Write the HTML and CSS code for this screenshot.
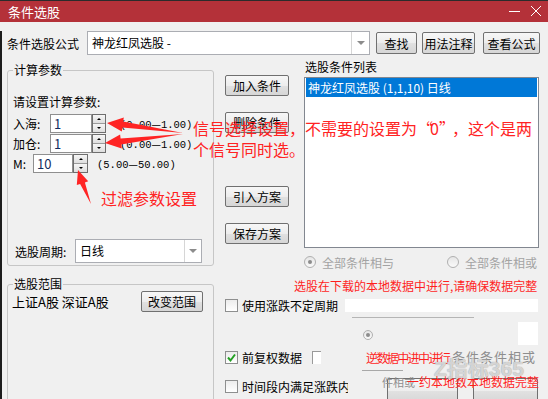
FILE: index.html
```html
<html>
<head>
    <link rel="stylesheet" href="styles.css">
    <title>条件选股</title>
</head>
<body>
<div class="window">
    <div class="titlebar">
        <span class="title">条件选股</span>
        <svg class="winbtns" width="40" height="21" viewBox="0 0 40 21">
            <line x1="3" y1="10.5" x2="14" y2="10.5" stroke="#fff" stroke-width="1"/>
            <line x1="25" y1="5" x2="35" y2="15" stroke="#fff" stroke-width="1"/>
            <line x1="35" y1="5" x2="25" y2="15" stroke="#fff" stroke-width="1"/>
        </svg>
    </div>

    <div class="client">
        <div class="formula-row">
            <span class="formula-label">条件选股公式</span>
            <div class="combo wide">
                <span class="combo-text">神龙红凤选股 -</span>
                <span class="combo-arrow"></span>
            </div>
            <button class="btn find">查找</button>
            <button class="btn usage">用法注释</button>
            <button class="btn view">查看公式</button>
        </div>

        <div class="main">
            <div class="col-left">
                <fieldset class="group params">
                    <legend>计算参数</legend>
                    <div class="hint">请设置计算参数:</div>
                    <div class="spin-row first">
                        <span class="lbl">入海:</span>
                        <span class="spin-input">1</span>
                        <span class="spin"><span class="up"></span><span class="down"></span></span>
                        <span class="range-text">(0.00<span class="dash">—</span>1.00)</span>
                    </div>
                    <div class="spin-row">
                        <span class="lbl">加仓:</span>
                        <span class="spin-input">1</span>
                        <span class="spin"><span class="up"></span><span class="down"></span></span>
                        <span class="range-text">(0.00<span class="dash">—</span>1.00)</span>
                    </div>
                    <div class="spin-row short">
                        <span class="lbl">M:</span>
                        <span class="spin-input">10</span>
                        <span class="spin"><span class="up"></span><span class="down"></span></span>
                        <span class="range-text">(5.00<span class="dash">—</span>50.00)</span>
                    </div>
                    <div class="period-row">
                        <span class="period-label">选股周期:</span>
                        <div class="combo period">
                            <span class="combo-text">日线</span>
                            <span class="combo-arrow"></span>
                        </div>
                    </div>
                </fieldset>

                <fieldset class="group range">
                    <legend>选股范围</legend>
                    <div class="range-row">
                        <span class="market">上证A股 深证A股</span>
                        <button class="btn change">改变范围</button>
                    </div>
                </fieldset>
            </div>

            <div class="col-right">
                <div class="upper">
                    <div class="btn-col">
                        <button class="btn add">加入条件</button>
                        <button class="btn del">删除条件</button>
                        <button class="btn load">引入方案</button>
                        <button class="btn save">保存方案</button>
                    </div>
                    <div class="list-col">
                        <div class="list-label">选股条件列表</div>
                        <div class="listbox">
                            <div class="list-item selected">神龙红凤选股 (1,1,10) 日线</div>
                        </div>
                        <div class="radio-row">
                            <span class="radio-item"><span class="radio on"></span><span class="radio-text">全部条件相与</span></span>
                            <span class="radio-item"><span class="radio"></span><span class="radio-text">全部条件相或</span></span>
                        </div>
                    </div>
                </div>

                <div class="lower">
                    <div class="note">选股在下载的本地数据中进行,请确保数据完整</div>
                    <div class="check-row first">
                        <span class="box"></span>
                        <span class="check-text">使用涨跌不定周期</span>
                        <span class="period-input"></span>
                    </div>
                    <div class="ghost-row">
                        <div class="ghost-line"><span class="radio small on"></span></div>
                        <div class="ghost-box"></div>
                    </div>
                    <div class="check-row second">
                        <span class="box checked">
                            <svg width="11" height="11" viewBox="0 0 11 11"><polyline points="2,5.5 4.5,8.5 9,2.5" fill="none" stroke="#23a023" stroke-width="2"/></svg>
                        </span>
                        <span class="check-text">前复权数据</span>
                        <span class="frag-box"></span>
                    </div>
                    <div class="check-row third">
                        <span class="box"></span>
                        <span class="check-text clip">时间段内满足涨跌内</span>
                        <button class="btn ghost-btn one"></button>
                        <button class="btn ghost-btn two"></button>
                    </div>
                </div>
            </div>
        </div>
    </div>

    <!-- annotations drawn over the dialog -->
    <svg class="arrows" width="548" height="399" viewBox="0 0 548 399">
        <polygon points="107,123 123.8,117.4 123.2,121.6 183,133 122.4,127.6 121.8,131.5" fill="#ff2424"/>
        <polygon points="105,143 120.1,134.6 120.6,138.6 183,134 121.2,144.4 121.7,148.4" fill="#ff2424"/>
        <polygon points="78,170 88.2,181.3 84.9,182.4 91,204 80.1,184 76.8,185.1" fill="#ff2424"/>
    </svg>
    <div class="anno signal">信号选择设置，不需要的设置为<span class="q">“</span>0<span class="q">”</span>，这个是两<br>个信号同时选。</div>
    <div class="anno filter">过滤参数设置</div>
    <div class="ghost-text red one">逆数据中进中进行</div>
    <div class="ghost-text grey one">条件条件相或</div>
    <div class="ghost-text grey two">件相或</div>
    <div class="ghost-text red two">一约本地数本地数据完整</div>
    <div class="ghost-rule"></div>
    <div class="watermark">Z指标365</div>
</div>
</body>
</html>
```

FILE: styles.css
```css
* {
    box-sizing: border-box;
}

body {
    margin: 0;
    width: 548px;
    height: 399px;
    overflow: hidden;
    background: #f0f0f0;
    font-family: "Noto Sans CJK SC", "Noto Sans", sans-serif;
    font-size: 12px;
    color: #000;
}

.window {
    position: relative;
    width: 548px;
    height: 399px;
    overflow: hidden;
}

.titlebar {
    height: 22px;
    background: #b43139;
    border-top: 1px solid #2b2b2b;
    color: #fff;
    display: flex;
    align-items: center;
    padding-left: 8px;
    font-size: 13px;
    line-height: 16px;
}

.title {
    flex: 1;
}

.winbtns {
    margin-right: 2px;
}

.client {
    height: 377px;
    border-left: 2px solid #1c1c1c;
    padding-left: 5px;
}

/* buttons */
.btn {
    height: 21px;
    padding: 0;
    border: 1px solid #707070;
    border-radius: 2px;
    background: linear-gradient(#f7f7f7, #ededed 50%, #e1e1e1 51%, #d6d6d6);
    font-family: inherit;
    font-size: 12px;
    line-height: 19px;
    color: #000;
    text-align: center;
}

/* combo boxes */
.combo {
    display: flex;
    height: 24px;
    background: #fff;
    border: 1px solid #abadb3;
}

.combo-text {
    flex: 1;
    padding-left: 4px;
    line-height: 22px;
}

.combo-arrow {
    width: 18px;
    border-left: 1px solid #d6d6d6;
    display: flex;
    align-items: center;
    justify-content: center;
}

.combo-arrow::after {
    content: "";
    border-left: 4px solid transparent;
    border-right: 4px solid transparent;
    border-top: 4px solid #8c8c8c;
}

.formula-row {
    display: flex;
    align-items: center;
    height: 24px;
    margin-top: 9px;
}

.formula-label {
    width: 80px;
}

.combo.wide {
    width: 283px;
}

.find {
    width: 41px;
    height: 22px;
    margin-left: 6px;
}

.usage {
    width: 53px;
    height: 22px;
    margin-left: 5px;
}

.view {
    width: 57px;
    height: 22px;
    margin-left: 8px;
}

.main {
    display: flex;
}

.col-left {
    width: 207px;
}

.group {
    margin: 0;
    padding: 0 5px;
    border: 1px solid #c6c6c6;
    border-radius: 3px;
    min-width: 0;
}

.group legend {
    padding: 0 1px;
    line-height: 14px;
    font-size: 12px;
}

.params {
    margin-top: 8px;
    height: 203px;
}

.hint {
    margin-top: 17px;
    line-height: 16px;
}

.spin-row {
    display: flex;
    align-items: center;
    height: 19px;
    margin-top: 1px;
}

.spin-row.first {
    margin-top: 4px;
}

.spin-row .lbl {
    width: 37px;
}

.spin-row.short .lbl {
    width: 20px;
}

.spin-input {
    width: 42px;
    height: 19px;
    background: #fff;
    border: 1px solid #8f8f8f;
    padding-left: 3px;
    font-size: 13px;
    line-height: 17px;
    color: #142c5e;
}

.spin-row.short .spin-input {
    width: 40px;
}

.spin {
    width: 14px;
    height: 19px;
    display: flex;
    flex-direction: column;
    border: 1px solid #6e6e6e;
    background: #f0f0f0;
}

.spin-row.short .spin {
    width: 15px;
}

.spin span {
    flex: 1;
    display: flex;
    align-items: center;
    justify-content: center;
    background: linear-gradient(#f6f6f6, #dedede);
}

.spin .up {
    border-bottom: 1px solid #9a9a9a;
}

.spin .up::after {
    content: "";
    border-left: 2px solid transparent;
    border-right: 2px solid transparent;
    border-bottom: 2px solid #000;
}

.spin .down::after {
    content: "";
    border-left: 2px solid transparent;
    border-right: 2px solid transparent;
    border-top: 2px solid #000;
}

.range-text {
    margin-left: 14px;
    font-family: "Liberation Mono", "Noto Sans CJK SC", monospace;
    font-size: 10.5px;
}

.range-text .dash {
    font-family: "Noto Sans CJK SC", sans-serif;
}

.spin-row.short .range-text {
    margin-left: 9px;
}

.period-row {
    display: flex;
    align-items: center;
    height: 24px;
    margin-top: 66px;
    padding-left: 2px;
}

.period-label {
    width: 60px;
}

.combo.period {
    width: 127px;
}

.combo.period .combo-arrow {
    width: 17px;
}

.range {
    margin-top: 11px;
    height: 140px;
}

.range-row {
    display: flex;
    align-items: center;
    height: 21px;
}

.market {
    margin-left: -1px;
    font-size: 13px;
}

.change {
    width: 62px;
    margin-left: auto;
    margin-right: 5px;
}

.col-right {
    margin-left: 11px;
    width: 323px;
}

.upper {
    display: flex;
}

.btn-col {
    width: 64px;
    display: flex;
    flex-direction: column;
}

.add {
    margin-top: 20px;
}

.del {
    margin-top: 16px;
}

.load {
    margin-top: 53px;
}

.save {
    margin-top: 16px;
}

.list-col {
    margin-left: 15px;
    width: 235px;
}

.list-label {
    margin-top: 5px;
    line-height: 14px;
    padding-left: 1px;
}

.listbox {
    margin-top: 3px;
    height: 171px;
    border: 1px solid #828790;
    background: #fff;
    padding: 0 1px;
}

.list-item {
    height: 19px;
    line-height: 19px;
    padding-left: 2px;
}

.list-item.selected {
    background: #0078d7;
    color: #fff;
}

.radio-row {
    display: flex;
    align-items: center;
    height: 14px;
    margin-top: 7px;
    color: #a3a3a3;
}

.radio-item {
    display: flex;
    align-items: center;
}

.radio-item:first-child {
    width: 143px;
}

.radio {
    width: 12px;
    height: 12px;
    border-radius: 50%;
    border: 1px solid #b0b0b0;
    background: linear-gradient(#e6e6e6, #fafafa);
    display: flex;
    align-items: center;
    justify-content: center;
}

.radio.on::after {
    content: "";
    width: 4px;
    height: 4px;
    border-radius: 50%;
    background: #8c8c8c;
}

.radio-text {
    margin-left: 6px;
}

.note {
    margin-top: 10px;
    padding-left: 69px;
    line-height: 14px;
    color: #ff1f1f;
}

.check-row {
    display: flex;
    align-items: center;
    height: 14px;
}

.check-row.first {
    margin-top: 5px;
}

.box {
    width: 13px;
    height: 13px;
    border: 1px solid #8e8f8f;
    background: linear-gradient(#ececec, #ffffff);
    display: flex;
    align-items: center;
    justify-content: center;
}

.check-text {
    margin-left: 4px;
    white-space: nowrap;
}

.check-text.clip {
    width: 106px;
    overflow: hidden;
}

.period-input {
    width: 193px;
    height: 13px;
    margin-left: 7px;
    background: #fff;
}

.ghost-row {
    display: flex;
    height: 33px;
}

.ghost-line {
    margin-left: 127px;
    margin-top: 5px;
    width: 122px;
    height: 20px;
    border-top: 1px solid #b5b5b5;
    padding-left: 11px;
    padding-top: 12px;
}

.radio.small {
    width: 10px;
    height: 10px;
}

.ghost-box {
    margin-left: 44px;
    margin-top: 10px;
    width: 20px;
    height: 23px;
    background: #fff;
}

.check-row.second {
    margin-top: 5px;
}

.frag-box {
    width: 9px;
    height: 13px;
    margin-left: 10px;
    border-left: 1px solid #9a9a9a;
    border-top: 1px solid #9a9a9a;
    background: #fff;
}

.check-row.third {
    margin-top: 15px;
}

.ghost-btn {
    height: 26px;
    align-self: flex-start;
    margin-top: -1px;
}

.ghost-btn.one {
    width: 71px;
    margin-left: 39px;
}

.ghost-btn.two {
    width: 65px;
    margin-left: 15px;
}

/* overlays */
.arrows {
    position: absolute;
    left: 0;
    top: 0;
    pointer-events: none;
}

.anno {
    position: absolute;
    color: #ff2323;
    font-size: 16px;
    line-height: 21px;
    white-space: nowrap;
}

.anno .q {
    display: inline-block;
    width: 13px;
    text-align: center;
}

.anno.signal {
    left: 193px;
    top: 118px;
}

.anno.filter {
    left: 101px;
    top: 188px;
}

.ghost-text {
    position: absolute;
    line-height: 14px;
    white-space: nowrap;
}

.ghost-text.red {
    color: #ff1f1f;
}

.ghost-text.grey {
    color: #8e8e8e;
}

.ghost-text.red.one {
    left: 366px;
    top: 351px;
    letter-spacing: -1.6px;
}

.ghost-text.grey.one {
    left: 452px;
    top: 350px;
    font-size: 13px;
    letter-spacing: 1px;
}

.ghost-text.grey.two {
    left: 382px;
    top: 375px;
    font-size: 11px;
}

.ghost-text.red.two {
    left: 407px;
    top: 375px;
}

.ghost-rule {
    position: absolute;
    left: 362px;
    top: 370px;
    width: 41px;
    border-top: 1px solid #a8a8a8;
}

.watermark {
    position: absolute;
    left: 434px;
    top: 357px;
    font-family: "Liberation Sans", "Noto Sans CJK SC", sans-serif;
    font-size: 21px;
    font-weight: bold;
    line-height: 24px;
    color: rgba(236, 236, 236, 0.75);
    text-shadow: 0 0 1px rgba(110, 110, 110, 0.8);
}
```
